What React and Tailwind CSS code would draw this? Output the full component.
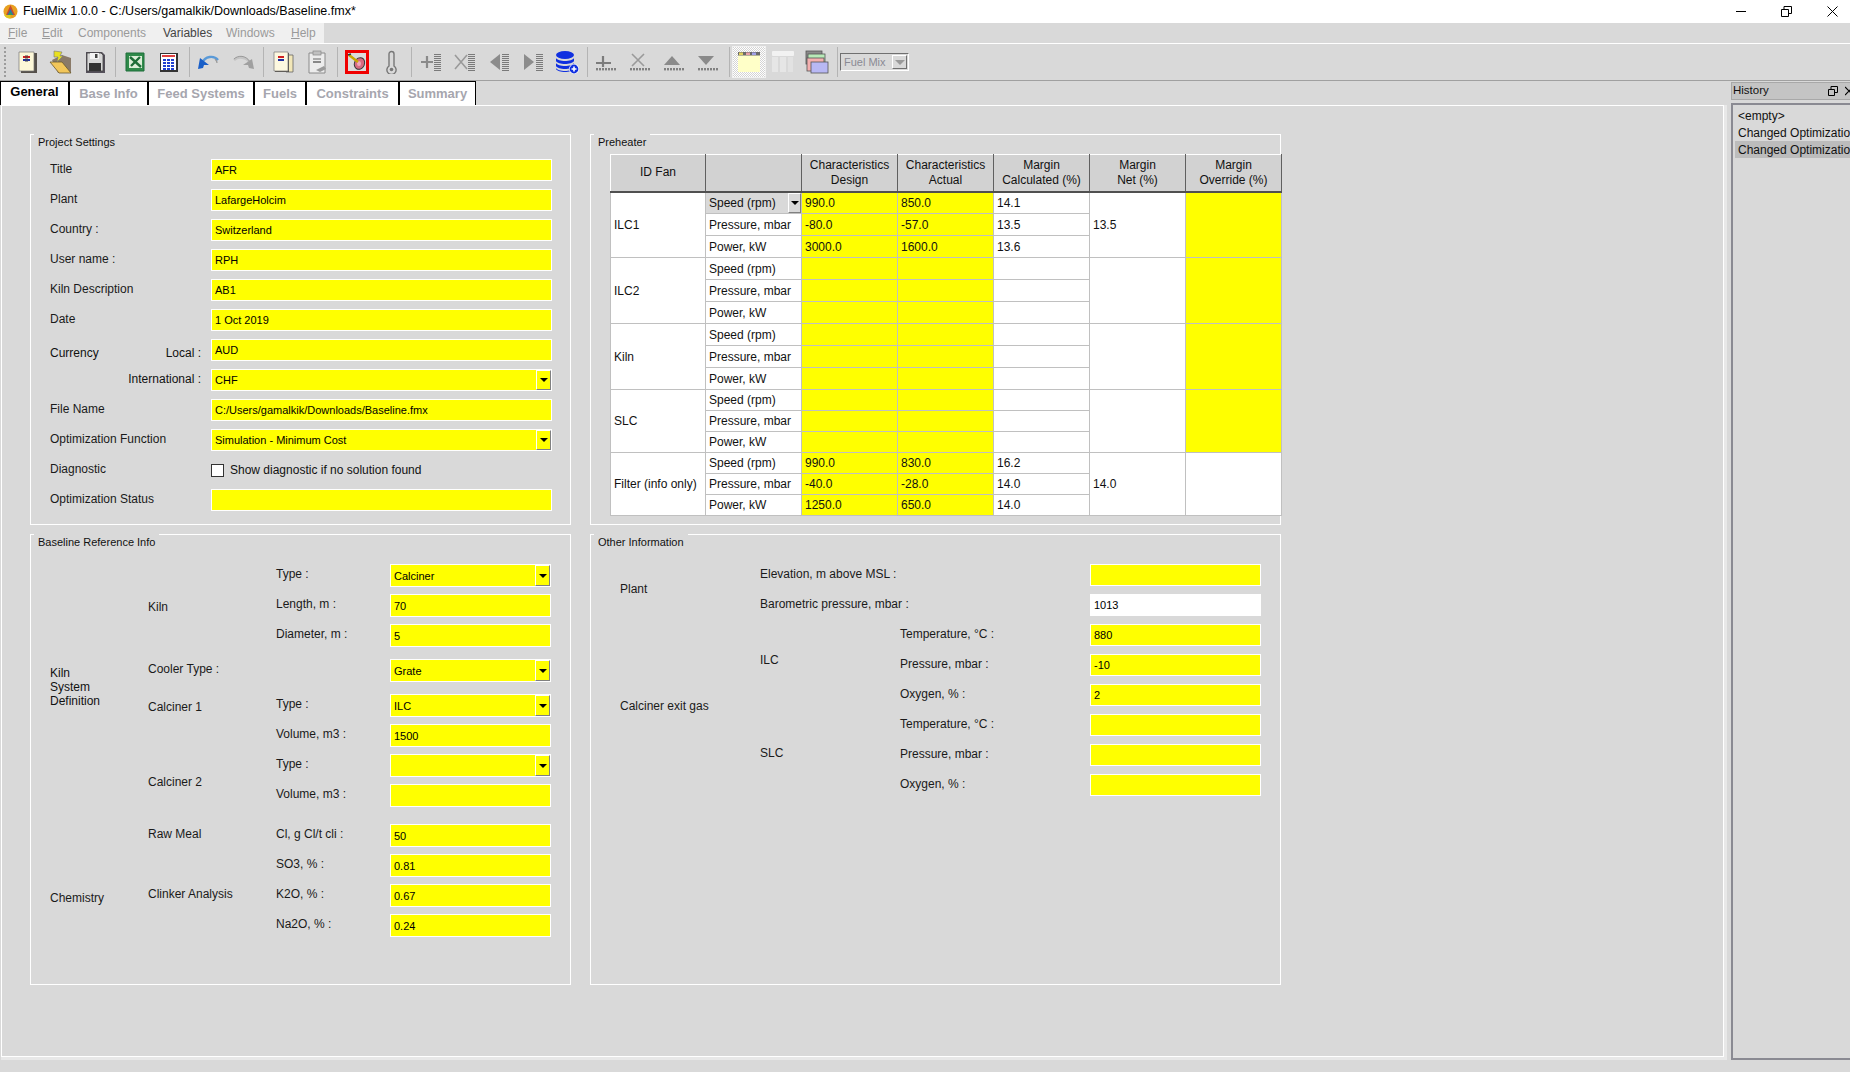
import React from "react";

const Svg = ({ children, w = 24, h = 24, className = "" }) => (
  <svg width={w} height={h} viewBox={`0 0 ${w} ${h}`} className={className}>
    {children}
  </svg>
);

// toolbar icons
const NewDoc = () => (
  <Svg>
    <rect x="6" y="3" width="16" height="20" fill="#55504a" />
    <path d="M4 2h15v19H4z" fill="#fdf8d8" stroke="#777" strokeWidth="0.7" />
    <rect x="8" y="6" width="7" height="2" fill="#d02020" />
    <rect x="8" y="9" width="7" height="2" fill="#2030a0" />
    <rect x="10" y="5" width="3" height="7" fill="#444" opacity="0.5" />
  </Svg>
);
const OpenFolder = () => (
  <Svg>
    <path d="M3 10l10-5 9 3v15H9z" fill="#8a7a68" />
    <path d="M1 12h12l9 11H10z" fill="#f2c65a" stroke="#6a5a30" strokeWidth="0.8" />
    <path d="M5 1l8 1-2 4 3 0-6 6 1-5-4 0z" fill="#e8e020" stroke="#777" strokeWidth="0.6" />
  </Svg>
);
const SaveDisk = () => (
  <Svg>
    <path d="M3 2h16l3 3v18H3z" fill="#55505a" />
    <path d="M4 3h14l2 2v16H4z" fill="#d8d8d8" stroke="#444" strokeWidth="0.8" />
    <rect x="7" y="3" width="9" height="6" fill="#f4f4f4" />
    <rect x="12" y="4" width="2.5" height="4" fill="#444" />
    <rect x="6" y="13" width="12" height="8" fill="#333" />
  </Svg>
);
const ExcelIcon = () => (
  <Svg>
    <rect x="3" y="3" width="18" height="18" fill="#2f8a4a" />
    <rect x="6" y="6" width="13" height="12" fill="#dcefd8" />
    <path d="M7 7l11 10M17 7L8 16" stroke="#1e6e38" strokeWidth="2.4" />
    <path d="M3 3h18v18H3z" fill="none" stroke="#1f6f3a" />
  </Svg>
);
const TableIcon = () => (
  <Svg>
    <rect x="3" y="3" width="18" height="19" fill="#333" />
    <rect x="4" y="4" width="15" height="16" fill="#fff" />
    <rect x="5" y="5" width="13" height="2" fill="#e04040" />
    {[6, 10, 14].map((x) =>
      [9, 12, 15, 18].map((y) => <rect key={`${x}-${y}`} x={x} y={y} width="3" height="2" fill="#2040d0" />)
    )}
  </Svg>
);
const UndoIcon = () => (
  <Svg>
    <path d="M5 13C8 6 17 5 21 10" fill="none" stroke="#5a9ad8" strokeWidth="2.4" />
    <path d="M20 13c0-2-1-3-2-4" fill="none" stroke="#999" strokeWidth="1.2" />
    <path d="M1 19l2-11 9 7-5 0-1 3z" fill="#1a5fc8" />
  </Svg>
);
const RedoIcon = () => (
  <Svg>
    <path d="M19 13C16 7 7 6 3 10" fill="none" stroke="#c4c4c4" strokeWidth="2.6" />
    <path d="M3 9c4-4 12-4 16 3" fill="none" stroke="#8c8c8c" strokeWidth="0.8" />
    <path d="M23 19l-2-10-9 6 5 0 1 3z" fill="#a0a0a0" />
  </Svg>
);
const CopyDoc = () => (
  <Svg>
    <path d="M15 5h7v17h-7z" fill="#f2e7b8" stroke="#666" strokeWidth="0.8" />
    <rect x="4" y="3" width="14" height="19" fill="#55504a" />
    <path d="M3 2h14v19H3z" fill="#fdf8e0" stroke="#777" strokeWidth="0.7" />
    <rect x="7" y="6" width="6" height="2" fill="#d02020" />
    <rect x="7" y="9" width="6" height="2" fill="#2030a0" />
  </Svg>
);
const PasteIcon = () => (
  <Svg>
    <path d="M4 3h16v20H4z" fill="#ececec" stroke="#8a8a8a" />
    <rect x="8" y="1" width="8" height="4" fill="#c0c0c0" stroke="#888" strokeWidth="0.7" />
    <rect x="8" y="8" width="8" height="2" fill="#aaa" />
    <rect x="8" y="11" width="8" height="2" fill="#888" />
    <path d="M11 20l8-4 2 3-6 3z" fill="#9a9a9a" />
  </Svg>
);
const TargetIcon = () => (
  <Svg>
    <rect x="1.5" y="1.5" width="21" height="21" fill="#dcdcdc" stroke="#f00000" strokeWidth="3" />
    <ellipse cx="14.5" cy="13.5" rx="5" ry="6" fill="#d86a80" stroke="#333" strokeWidth="1" transform="rotate(25 14.5 13.5)" />
    <ellipse cx="14" cy="13.5" rx="2" ry="2.6" fill="#f0a8b8" />
    <path d="M4 5l9 7" stroke="#c8a800" strokeWidth="2.4" />
    <path d="M3 5l3-1" stroke="#333" strokeWidth="1.4" />
  </Svg>
);
const Thermo = () => (
  <Svg>
    <path d="M10 4a2.5 2.5 0 0 1 5 0v12a4.6 4.6 0 1 1-5 0z" fill="#d9d9d9" stroke="#777" strokeWidth="1.4" />
    <circle cx="12.5" cy="19.5" r="1.8" fill="#777" />
  </Svg>
);
const Lines = ({ x, y = 4, n = 9, w = 7, vertical = true }) => (
  <>
    {Array.from({ length: n }).map((_, i) =>
      vertical ? (
        <rect key={i} x={x} y={y + i * 2} width={w} height="1" fill="#7a7a7a" />
      ) : (
        <rect key={i} x={x + i * 3} y={y} width="2" height="2.4" fill="#808080" />
      )
    )}
  </>
);
const ColAdd = () => (
  <Svg>
    <path d="M2 12h12M8 6v12" stroke="#8a8a8a" strokeWidth="2.2" />
    <Lines x={15} />
  </Svg>
);
const ColDel = () => (
  <Svg>
    <path d="M2 5l12 14M14 5L2 19" stroke="#9a9a9a" strokeWidth="1.6" />
    <Lines x={15} />
  </Svg>
);
const ColLeft = () => (
  <Svg>
    <path d="M13 4v16L3 12z" fill="#8c8c8c" />
    <Lines x={15} />
  </Svg>
);
const ColRight = () => (
  <Svg>
    <path d="M3 4v16l10-8z" fill="#8c8c8c" />
    <Lines x={15} />
  </Svg>
);
const DbAdd = () => (
  <Svg>
    <ellipse cx="10" cy="5" rx="9" ry="4" fill="#1030e0" />
    <path d="M1 8c2 4 16 4 18 0v3c-2 4-16 4-18 0z" fill="#1030e0" />
    <path d="M1 13c2 4 16 4 18 0v3c-2 4-16 4-18 0z" fill="#1030e0" />
    <path d="M1 18c2 4 16 4 18 0v1c-2 4-16 4-18 0z" fill="#1030e0" />
    <circle cx="19" cy="19" r="5" fill="#fff" />
    <circle cx="19" cy="19" r="4.4" fill="#1030e0" />
    <path d="M16.5 19h5M19 16.5v5" stroke="#fff" strokeWidth="1.6" />
  </Svg>
);
const RowAdd = () => (
  <Svg>
    <path d="M1 13h15M8 6v11" stroke="#7c7c7c" strokeWidth="2.2" />
    <Lines x={1} y={18} n={7} vertical={false} />
  </Svg>
);
const RowDel = () => (
  <Svg>
    <path d="M3 4l12 12M15 4L3 16" stroke="#9a9a9a" strokeWidth="1.6" />
    <Lines x={1} y={18} n={7} vertical={false} />
  </Svg>
);
const RowUp = () => (
  <Svg>
    <path d="M1 15L9 6l8 9z" fill="#8a8a8a" />
    <Lines x={1} y={18} n={7} vertical={false} />
  </Svg>
);
const RowDown = () => (
  <Svg>
    <path d="M1 6h16l-8 9z" fill="#8a8a8a" />
    <Lines x={1} y={18} n={7} vertical={false} />
  </Svg>
);
const NoteIcon = () => (
  <Svg>
    <rect x="1" y="2" width="22" height="20" fill="#ffffc8" />
    <rect x="1" y="2" width="22" height="3.5" fill="#6a6a6a" />
    <rect x="2" y="2.5" width="4" height="2.5" fill="#e0d060" />
    <rect x="9" y="2.5" width="4" height="2.5" fill="#e8a0a8" />
    <rect x="15" y="2.5" width="4" height="2.5" fill="#a0a0e8" />
  </Svg>
);
const GhostTable = () => (
  <Svg>
    <rect x="1" y="1" width="22" height="5" rx="1" fill="#f2f2f2" />
    <rect x="1" y="7" width="6" height="15" fill="#e6e6e6" />
    <rect x="9" y="7" width="6" height="15" fill="#e6e6e6" />
    <rect x="17" y="7" width="5" height="15" fill="#e2e2e2" />
  </Svg>
);
const WindowsIcon = () => (
  <Svg>
    <rect x="1" y="1" width="16" height="13" fill="#8a8a8a" stroke="#555" strokeWidth="0.8" />
    <rect x="3" y="4" width="17" height="12" fill="#b8eab8" stroke="#555" strokeWidth="0.8" />
    <rect x="2" y="8" width="17" height="13" fill="#f4b0b0" stroke="#555" strokeWidth="0.8" />
    <rect x="6" y="12" width="17" height="11" fill="#b8b8f4" stroke="#555" strokeWidth="0.8" />
  </Svg>
);

const Btn = ({ children }) => <div className="flex w-[34px] justify-center">{children}</div>;
const Sep = () => (
  <div className="flex h-[30px] w-[6px] justify-center">
    <div className="w-px bg-[#b4b4b4]" />
  </div>
);

const AppIcon = () => (
  <Svg w={15} h={15}>
    <circle cx="7.5" cy="7.5" r="7" fill="#e8a020" />
    <path d="M7.5 7.5L1 11a7 7 0 0 0 6.5 3.5z" fill="#e0c820" />
    <path d="M7.5 1L3 11h9z" fill="#c84a30" />
    <path d="M7.5 5L4.5 11h6z" fill="#2a78a8" />
    <path d="M7.5 8l-2 3h4z" fill="#3a9a50" />
  </Svg>
);

const Arrow = () => (
  <span className="h-0 w-0 border-x-[4px] border-t-[4px] border-x-transparent border-t-black" />
);

const ComboBtn = ({ bg = "bg-[#ffff00]" }) => (
  <span className={`absolute right-0 top-0 bottom-0 flex w-[15px] items-center justify-center border-t border-l border-white border-r border-b border-r-[#808080] border-b-[#808080] ${bg}`}>
    <Arrow />
  </span>
);

const Field = ({ value = "", combo, white, h = "h-[22px]" }) => (
  <div className={`relative flex items-center border border-white pl-[3px] pt-px text-[11px] text-black ${h} ${white ? "bg-white" : "bg-[#ffff00]"}`}>
    {value}
    {combo && <ComboBtn />}
  </div>
);

const Label = ({ children, className = "" }) => (
  <div className={`flex items-center pb-[3px] text-[#1a1a1a] ${className}`}>{children}</div>
);

const Panel = ({ title, children, className = "" }) => (
  <div className={`relative border border-white ${className}`}>
    <div className="absolute -top-px left-[3px] h-[15px] bg-[#d9d9d9] px-[4px] pt-px text-[11px] leading-[14px] text-[#111]">
      {title}
    </div>
    {children}
  </div>
);

const projectRows = [
  ["Title", "AFR"],
  ["Plant", "LafargeHolcim"],
  ["Country :", "Switzerland"],
  ["User name :", "RPH"],
  ["Kiln Description", "AB1"],
  ["Date", "1 Oct 2019"],
];

const ProjectSettings = () => (
  <Panel title="Project Settings">
    <div className="grid grid-cols-[161px_341px] auto-rows-[22px] gap-y-[8px] pl-[19px] pt-[24px]">
      {projectRows.map(([label, value]) => (
        <React.Fragment key={label}>
          <Label>{label}</Label>
          <Field value={value} />
        </React.Fragment>
      ))}
      <div className="flex justify-between pr-[10px] pt-[5px]">
        <span>Currency</span>
        <span>Local :</span>
      </div>
      <Field value="AUD" />
      <div className="pr-[10px] text-right leading-[20px]">International :</div>
      <Field value="CHF" combo />
      <Label>File Name</Label>
      <Field value="C:/Users/gamalkik/Downloads/Baseline.fmx" />
      <Label>Optimization Function</Label>
      <Field value="Simulation - Minimum Cost" combo />
      <Label>Diagnostic</Label>
      <div className="flex items-center gap-[6px]">
        <span className="h-[13px] w-[13px] border border-[#333] bg-white" />
        <span>Show diagnostic if no solution found</span>
      </div>
      <Label>Optimization Status</Label>
      <Field />
    </div>
  </Panel>
);

const BaselineInfo = () => (
  <Panel title="Baseline Reference Info">
    <div className="ml-[19px] mt-[29px] grid grid-cols-[98px_128px_114px_161px] grid-rows-[30px_30px_35px_35px_30px_30px_30px_40px_30px_30px_30px_30px]">
      <div className="col-start-1 row-start-4 row-span-2 flex items-center pb-[9px] leading-[14px]">
        Kiln
        <br />
        System
        <br />
        Definition
      </div>
      <Label className="col-start-1 row-start-11 h-[30px] pb-0">Chemistry</Label>

      <Label className="col-start-2 row-start-1 row-span-3 pb-[9px]">Kiln</Label>
      <Label className="col-start-2 row-start-4 h-[23px]">Cooler Type :</Label>
      <Label className="col-start-2 row-start-5 h-[23px] pt-[6px] pb-0">Calciner 1</Label>
      <Label className="col-start-2 row-start-7 row-span-2 pb-[14px]">Calciner 2</Label>
      <Label className="col-start-2 row-start-9 h-[23px]">Raw Meal</Label>
      <Label className="col-start-2 row-start-11 h-[23px]">Clinker Analysis</Label>

      {[
        [1, "Type :", "Calciner", true],
        [2, "Length, m :", "70"],
        [3, "Diameter, m :", "5"],
        [4, null, "Grate", true],
        [5, "Type :", "ILC", true],
        [6, "Volume, m3 :", "1500"],
        [7, "Type :", "", true],
        [8, "Volume, m3 :", ""],
        [9, "Cl, g Cl/t cli :", "50"],
        [10, "SO3, % :", "0.81"],
        [11, "K2O, % :", "0.67"],
        [12, "Na2O, % :", "0.24"],
      ].map(([row, label, value, combo]) => (
        <React.Fragment key={row}>
          {label && (
            <div style={{ gridRow: row, gridColumn: 3 }}>
              <Label className="h-[23px]">{label}</Label>
            </div>
          )}
          <div style={{ gridRow: row, gridColumn: 4 }}>
            <Field value={value} combo={combo} h="h-[23px]" />
          </div>
        </React.Fragment>
      ))}
    </div>
  </Panel>
);

const OtherInfo = () => (
  <Panel title="Other Information">
    <div className="ml-[29px] mt-[29px] grid grid-cols-[140px_140px_190px_171px] grid-rows-[repeat(8,30px)]">
      <Label className="col-start-1 row-start-1 row-span-2 pb-[10px]">Plant</Label>
      <Label className="col-start-1 row-start-3 row-span-6 pb-[16px]">Calciner exit gas</Label>
      <Label className="col-start-2 col-span-2 row-start-1 h-[22px] pb-0">Elevation, m above MSL :</Label>
      <Label className="col-start-2 col-span-2 row-start-2 h-[22px] pb-0">Barometric pressure, mbar :</Label>
      <Label className="col-start-2 row-start-3 row-span-3 pb-[18px]">ILC</Label>
      <Label className="col-start-2 row-start-6 row-span-3 pb-[12px]">SLC</Label>
      <Label className="col-start-3 row-start-3 h-[22px]">Temperature, °C :</Label>
      <Label className="col-start-3 row-start-4 h-[22px] pb-0">Pressure, mbar :</Label>
      <Label className="col-start-3 row-start-5 h-[22px]">Oxygen, % :</Label>
      <Label className="col-start-3 row-start-6 h-[22px]">Temperature, °C :</Label>
      <Label className="col-start-3 row-start-7 h-[22px] pb-0">Pressure, mbar :</Label>
      <Label className="col-start-3 row-start-8 h-[22px]">Oxygen, % :</Label>
      <div className="col-start-4 row-start-1"><Field /></div>
      <div className="col-start-4 row-start-2"><Field value="1013" white /></div>
      <div className="col-start-4 row-start-3"><Field value="880" /></div>
      <div className="col-start-4 row-start-4"><Field value="-10" /></div>
      <div className="col-start-4 row-start-5"><Field value="2" /></div>
      <div className="col-start-4 row-start-6"><Field /></div>
      <div className="col-start-4 row-start-7"><Field /></div>
      <div className="col-start-4 row-start-8"><Field /></div>
    </div>
  </Panel>
);

const fanGroups = [
  {
    name: "ILC1",
    h: "h-[22px]",
    net: "13.5",
    override: true,
    vals: [["990.0", "850.0", "14.1"], ["-80.0", "-57.0", "13.5"], ["3000.0", "1600.0", "13.6"]],
  },
  { name: "ILC2", h: "h-[22px]", net: "", override: true, vals: [["", "", ""], ["", "", ""], ["", "", ""]] },
  { name: "Kiln", h: "h-[22px]", net: "", override: true, vals: [["", "", ""], ["", "", ""], ["", "", ""]] },
  { name: "SLC", h: "h-[21px]", net: "", override: true, vals: [["", "", ""], ["", "", ""], ["", "", ""]] },
  {
    name: "Filter (info only)",
    h: "h-[21px]",
    net: "14.0",
    override: false,
    vals: [["990.0", "830.0", "16.2"], ["-40.0", "-28.0", "14.0"], ["1250.0", "650.0", "14.0"]],
  },
];
const rowNames = ["Speed (rpm)", "Pressure, mbar", "Power, kW"];
const headers = [
  ["ID Fan"],
  [""],
  ["Characteristics", "Design"],
  ["Characteristics", "Actual"],
  ["Margin", "Calculated (%)"],
  ["Margin", "Net (%)"],
  ["Margin", "Override (%)"],
];

const cellCls = "border border-[#c0c0c0] px-[3px] p-0 text-[12px] leading-none align-middle";

const PreheaterTable = () => (
  <table className="ml-[19px] mt-[19px] w-[671px] table-fixed border-collapse bg-white">
    <colgroup>
      <col className="w-[95px]" />
      {[0, 1, 2, 3, 4, 5].map((i) => (
        <col key={i} className="w-[96px]" />
      ))}
    </colgroup>
    <thead>
      <tr className="h-[37px]">
        {headers.map((lines, i) => (
          <th
            key={i}
            className="border-t border-l border-white border-r border-b-2 border-r-[#606060] border-b-[#505050] bg-[#d2d2d2] text-center text-[12px] font-normal leading-[15px] text-[#111]"
          >
            {lines.map((l, j) => (
              <div key={j}>{l}</div>
            ))}
          </th>
        ))}
      </tr>
    </thead>
    <tbody>
      {fanGroups.map((g, gi) =>
        g.vals.map((v, ri) => (
          <tr key={`${g.name}-${ri}`} className={g.h}>
            {ri === 0 && (
              <td rowSpan={3} className={cellCls}>
                {g.name}
              </td>
            )}
            {gi === 0 && ri === 0 ? (
              <td className={`${cellCls} relative bg-[#d9d9d9]`}>
                {rowNames[ri]}
                <span className="absolute bottom-0 right-0 top-0 flex w-[13px] items-center justify-center border-l border-t border-white border-b border-r border-b-[#808080] border-r-[#808080] bg-[#d9d9d9]">
                  <Arrow />
                </span>
              </td>
            ) : (
              <td className={cellCls}>{rowNames[ri]}</td>
            )}
            <td className={`${cellCls} bg-[#ffff00]`}>{v[0]}</td>
            <td className={`${cellCls} bg-[#ffff00]`}>{v[1]}</td>
            <td className={cellCls}>{v[2]}</td>
            {ri === 0 && (
              <td rowSpan={3} className={cellCls}>
                {g.net}
              </td>
            )}
            {ri === 0 && <td rowSpan={3} className={`${cellCls} ${g.override ? "bg-[#ffff00]" : ""}`} />}
          </tr>
        ))
      )}
    </tbody>
  </table>
);

const tabs = [
  ["General", "w-[69px]"],
  ["Base Info", "w-[79px]"],
  ["Feed Systems", "w-[106px]"],
  ["Fuels", "w-[52px]"],
  ["Constraints", "w-[93px]"],
  ["Summary", "w-[77px]"],
];

const menus = [
  ["File", "w-[34px]", "text-[#9a9a9a]", true],
  ["Edit", "w-[36px]", "text-[#9a9a9a]", true],
  ["Components", "w-[85px]", "text-[#9a9a9a]"],
  ["Variables", "w-[63px]", "text-[#444]"],
  ["Windows", "w-[65px]", "text-[#9a9a9a]"],
  ["Help", "w-[33px]", "text-[#9a9a9a]", true],
];

export default function App() {
  return (
    <div className="flex h-[1072px] w-[1850px] flex-col overflow-hidden bg-[#d9d9d9] font-['Liberation_Sans',sans-serif] text-[12px] text-[#111]">
      {/* title bar */}
      <div className="flex h-[23px] items-center bg-white">
        <div className="ml-[3px] mr-[5px] flex">
          <AppIcon />
        </div>
        <span className="text-[12.5px] text-black">FuelMix 1.0.0 - C:/Users/gamalkik/Downloads/Baseline.fmx*</span>
        <div className="ml-auto flex items-center">
          <div className="mr-[35px] h-px w-[10px] bg-black" />
          <svg width="11" height="11" viewBox="0 0 11 11" className="mr-[35px]">
            <path d="M0.5 3.5h7v7h-7zM3 3V.5h7.5v7H8" fill="none" stroke="#000" />
          </svg>
          <svg width="11" height="11" viewBox="0 0 11 11" className="mr-[12px]">
            <path d="M.5.5l10 10M10.5.5l-10 10" fill="none" stroke="#000" />
          </svg>
        </div>
      </div>

      {/* menu */}
      <div className="flex h-[21px] border-b border-white">
        <div className="flex w-[324px] items-center bg-[#f0f0f0] pl-[8px] text-[12px]">
          {menus.map(([name, w, color, mnemonic]) => (
            <span key={name} className={`${w} ${color}`}>
              {mnemonic ? (
                <>
                  <span className="underline">{name[0]}</span>
                  {name.slice(1)}
                </>
              ) : (
                name
              )}
            </span>
          ))}
        </div>
      </div>

      {/* toolbar */}
      <div className="flex h-[37px] items-center border-b border-[#a0a0a0]">
        <div className="flex w-[10px] justify-center">
          <div className="h-[30px] w-[2px] bg-[repeating-linear-gradient(to_bottom,#9c9c9c_0,#9c9c9c_2px,transparent_2px,transparent_4px)]" />
        </div>
        <Btn><NewDoc /></Btn>
        <Btn><OpenFolder /></Btn>
        <Btn><SaveDisk /></Btn>
        <Sep />
        <Btn><ExcelIcon /></Btn>
        <Btn><TableIcon /></Btn>
        <Sep />
        <Btn><UndoIcon /></Btn>
        <Btn><RedoIcon /></Btn>
        <Sep />
        <Btn><CopyDoc /></Btn>
        <Btn><PasteIcon /></Btn>
        <Sep />
        <Btn><TargetIcon /></Btn>
        <Btn><Thermo /></Btn>
        <Sep />
        <Btn><ColAdd /></Btn>
        <Btn><ColDel /></Btn>
        <Btn><ColLeft /></Btn>
        <Btn><ColRight /></Btn>
        <Btn><DbAdd /></Btn>
        <Sep />
        <Btn><RowAdd /></Btn>
        <Btn><RowDel /></Btn>
        <Btn><RowUp /></Btn>
        <Btn><RowDown /></Btn>
        <Sep />
        <div className="flex h-[32px] w-[34px] items-center justify-center border border-[#f0f0f0] bg-[repeating-conic-gradient(#ffffff_0_25%,#d4d4d4_0_50%)] bg-[length:2px_2px]">
          <NoteIcon />
        </div>
        <Btn><GhostTable /></Btn>
        <Btn><WindowsIcon /></Btn>
        <Sep />
        <div className="relative flex h-[18px] w-[69px] items-center border border-t-[#707070] border-l-[#707070] border-b-white border-r-white pl-[3px] text-[11px] text-[#8a8a94]">
          Fuel Mix
          <span className="absolute bottom-[1px] right-[1px] top-[1px] flex w-[15px] items-center justify-center border border-t-white border-l-white border-b-[#707070] border-r-[#707070] bg-[#d9d9d9]">
            <span className="h-0 w-0 border-x-[5px] border-t-[5px] border-x-transparent border-t-[#9a9a9a]" />
          </span>
        </div>
      </div>

      {/* body */}
      <div className="flex flex-1">
        <div className="flex w-[1727px] flex-col">
          <div className="flex h-[24px]">
            {tabs.map(([name, w], i) => (
              <div
                key={name}
                className={`${w} flex items-center justify-center border-x border-t border-black bg-white text-[13px] font-bold ${
                  i === 0 ? "pb-[3px] text-black" : "pt-[1px] text-[#a6a6ae]"
                }`}
              >
                {name}
              </div>
            ))}
          </div>
          <div className="ml-px h-[955px] border-b-[3px] border-r-[3px] border-[#e8e8e8]">
            <div className="h-[952px] border border-white pl-[28px] pt-[28px]">
              <div className="grid grid-cols-[541px_691px] grid-rows-[391px_451px] gap-x-[19px] gap-y-[9px]">
                <ProjectSettings />
                <Panel title="Preheater">
                  <PreheaterTable />
                </Panel>
                <BaselineInfo />
                <OtherInfo />
              </div>
            </div>
          </div>
        </div>

        {/* history dock */}
        <div className="ml-[4px] flex flex-1 flex-col overflow-hidden pt-px">
          <div className="flex h-[18px] w-[125px] items-center border border-[#a8a8a8] bg-[#c4c4c4] pl-px text-[11.5px]">
            History
            <svg width="10" height="10" viewBox="0 0 10 10" className="ml-[59px]">
              <path d="M.5 3.5h6v6h-6zM3 3V.5h6.5v6H7" fill="none" stroke="#000" />
            </svg>
            <svg width="10" height="10" viewBox="0 0 10 10" className="ml-[7px]">
              <path d="M0 1l8 8M8 1l-8 8" fill="none" stroke="#000" strokeWidth="1.2" />
            </svg>
          </div>
          <div className="mt-[3px] h-[957px] w-[130px] border-2 border-[#8a8a92] pt-[2px] pl-[2px] text-[12px]">
            {["<empty>", "Changed Optimization", "Changed Optimization"].map((t, i) => (
              <div key={i} className={`flex h-[17px] items-center whitespace-nowrap pl-[3px] ${i === 2 ? "bg-[#bcbcbc]" : ""}`}>
                {t}
              </div>
            ))}
          </div>
        </div>
      </div>
    </div>
  );
}
